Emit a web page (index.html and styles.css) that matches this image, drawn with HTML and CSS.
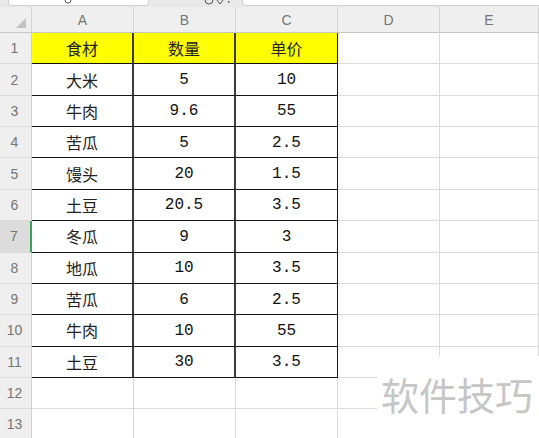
FILE: index.html
```html
<!DOCTYPE html>
<html lang="zh">
<head>
<meta charset="utf-8">
<title>Sheet</title>
<link rel="stylesheet" href="styles.css">
</head>
<body>
<div class="topbar">
  <div class="namebox">
    <svg class="frag" width="10" height="7" viewBox="0 0 10 7"><path d="M2 0 Q2 3 5 3 Q8 3 8 0" fill="none" stroke="#555" stroke-width="1"/></svg>
  </div>
  <div class="fxicons">
    <svg class="frag2" width="30" height="7" viewBox="0 0 30 7"><path d="M1 0 Q1 4 5 4 Q9 4 9 0" fill="none" stroke="#555" stroke-width="1"/><path d="M13 0 L16 4 L19 0" fill="none" stroke="#555" stroke-width="1"/><rect x="24" y="1" width="1.5" height="1.5" fill="#555"/></svg>
  </div>
  <div class="formulabox"></div>
</div>
<div class="sheet">
  <div class="corner"><span class="tri"></span></div>
  <div class="colhead">A</div><div class="colhead">B</div><div class="colhead">C</div><div class="colhead">D</div><div class="colhead">E</div>

  <div class="rowhead">1</div><div class="cell d hdr cn">食材</div><div class="cell d hdr cn">数量</div><div class="cell d hdr cn cr">单价</div><div class="cell"></div><div class="cell"></div>
  <div class="rowhead">2</div><div class="cell d cn">大米</div><div class="cell d num">5</div><div class="cell d num cr">10</div><div class="cell"></div><div class="cell"></div>
  <div class="rowhead">3</div><div class="cell d cn">牛肉</div><div class="cell d num">9.6</div><div class="cell d num cr">55</div><div class="cell"></div><div class="cell"></div>
  <div class="rowhead">4</div><div class="cell d cn">苦瓜</div><div class="cell d num">5</div><div class="cell d num cr">2.5</div><div class="cell"></div><div class="cell"></div>
  <div class="rowhead">5</div><div class="cell d cn">馒头</div><div class="cell d num">20</div><div class="cell d num cr">1.5</div><div class="cell"></div><div class="cell"></div>
  <div class="rowhead">6</div><div class="cell d cn">土豆</div><div class="cell d num">20.5</div><div class="cell d num cr">3.5</div><div class="cell"></div><div class="cell"></div>
  <div class="rowhead active">7</div><div class="cell d cn">冬瓜</div><div class="cell d num">9</div><div class="cell d num cr">3</div><div class="cell"></div><div class="cell"></div>
  <div class="rowhead">8</div><div class="cell d cn">地瓜</div><div class="cell d num">10</div><div class="cell d num cr">3.5</div><div class="cell"></div><div class="cell"></div>
  <div class="rowhead">9</div><div class="cell d cn">苦瓜</div><div class="cell d num">6</div><div class="cell d num cr">2.5</div><div class="cell"></div><div class="cell"></div>
  <div class="rowhead">10</div><div class="cell d cn">牛肉</div><div class="cell d num">10</div><div class="cell d num cr">55</div><div class="cell"></div><div class="cell"></div>
  <div class="rowhead">11</div><div class="cell d cn">土豆</div><div class="cell d num">30</div><div class="cell d num cr">3.5</div><div class="cell"></div><div class="cell"></div>
  <div class="rowhead">12</div><div class="cell"></div><div class="cell"></div><div class="cell"></div><div class="cell"></div><div class="cell"></div>
  <div class="rowhead">13</div><div class="cell"></div><div class="cell"></div><div class="cell"></div><div class="cell"></div><div class="cell"></div>
</div>
<div class="watermark">软件技巧</div>
</body>
</html>
```
FILE: styles.css
```css
html, body {
  margin: 0;
  padding: 0;
  width: 539px;
  height: 438px;
  overflow: hidden;
  background: #ffffff;
  position: relative;
}

.topbar {
  height: 7px;
  background: #e9e9e9;
  display: flex;
  align-items: flex-start;
  overflow: hidden;
}

.namebox {
  margin-left: 8px;
  width: 139px;
  height: 5px;
  background: #ffffff;
  border: 1px solid #d2d2d2;
  border-top: none;
  border-radius: 0 0 4px 4px;
  position: relative;
  overflow: hidden;
}

.formulabox {
  flex: 1;
  height: 5px;
  background: #ffffff;
  border: 1px solid #d2d2d2;
  border-top: none;
  border-right: none;
  border-radius: 0 0 0 4px;
}

.fxicons {
  width: 93px;
  height: 7px;
  position: relative;
  overflow: hidden;
}

.frag {
  position: absolute;
  left: 54px;
  top: 0;
}

.frag2 {
  position: absolute;
  left: 55px;
  top: 0;
}

.sheet {
  display: grid;
  grid-template-columns: 32px 102px 102px 102px 102px 1fr;
  grid-template-rows: 26px repeat(13, 31.36px);
}

.corner {
  background: #efefef;
  border-right: 1px solid #d4d4d4;
  border-bottom: 1px solid #c6c6c6;
  box-sizing: border-box;
  position: relative;
}

.tri {
  position: absolute;
  right: 5px;
  bottom: 4px;
  width: 0;
  height: 0;
  border-left: 10px solid transparent;
  border-bottom: 10px solid #c4c4c4;
}

.colhead {
  background: #efefef;
  border-right: 1px solid #d4d4d4;
  border-bottom: 1px solid #c6c6c6;
  box-sizing: border-box;
  display: flex;
  align-items: center;
  justify-content: center;
  font-family: "Liberation Sans", Arial, sans-serif;
  font-size: 14px;
  color: #757575;
  padding-top: 1px;
}

.rowhead {
  background: #efefef;
  border-right: 1px solid #cfcfcf;
  border-bottom: 1px solid #dadada;
  box-sizing: border-box;
  display: flex;
  align-items: center;
  justify-content: center;
  font-family: "Liberation Sans", Arial, sans-serif;
  font-size: 14px;
  color: #757575;
  padding-right: 2px;
}

.rowhead.active {
  background: #dcdcdc;
  border-right: 2px solid #3aa357;
}

.cell {
  border-right: 1px solid #dadada;
  border-bottom: 1px solid #dadada;
  box-sizing: border-box;
  display: flex;
  align-items: center;
  justify-content: center;
  color: #1a1a1a;
}

.cell.d {
  border-right: 2px solid #3c3c3c;
  border-bottom: 1px solid #151515;
}

.cell.d.cr {
  border-right: 1px solid #151515;
}

.hdr {
  background: #ffff00;
}

.cn {
  font-family: "Noto Sans CJK SC", sans-serif;
  font-size: 16px;
  color: #222222;
}

.num {
  font-family: "Liberation Mono", "Courier New", monospace;
  font-size: 16px;
  color: #111111;
  padding-top: 1px;
}

.watermark {
  position: absolute;
  left: 377px;
  top: 356px;
  width: 162px;
  height: 82px;
  background: #ffffff;
  box-sizing: border-box;
  padding: 19px 0 0 4px;
  font-family: "Noto Sans CJK SC", sans-serif;
  font-size: 38px;
  line-height: 38px;
  color: #c6c6c6;
  white-space: nowrap;
}
```
